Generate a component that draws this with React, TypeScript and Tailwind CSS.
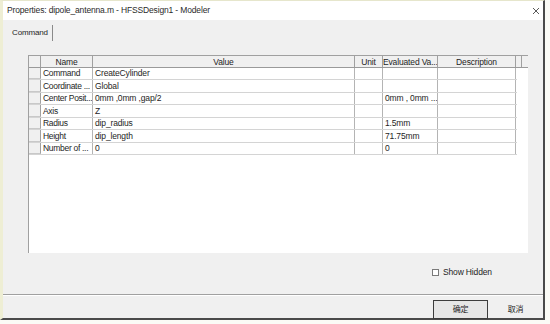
import React from "react";

const cols = [
  { w: "w-[52px]", label: "Name" },
  { w: "w-[262px]", label: "Value" },
  { w: "w-[28px]", label: "Unit" },
  { w: "w-[55px]", label: "Evaluated Va..." },
  { w: "w-[78px]", label: "Description" },
];

const rows = [
  ["Command", "CreateCylinder", "", "", ""],
  ["Coordinate ...", "Global", "", "", ""],
  ["Center Posit...", "0mm ,0mm ,gap/2", "", "0mm , 0mm ...", ""],
  ["Axis", "Z", "", "", ""],
  ["Radius", "dip_radius", "", "1.5mm", ""],
  ["Height", "dip_length", "", "71.75mm", ""],
  ["Number of ...", "0", "", "0", ""],
];

export default function App() {
  return (
    <div
      className="w-[550px] h-[324px] bg-[#fbfbf6] overflow-hidden text-[#1e1e1e] tracking-[-0.15px]"
      style={{ fontFamily: '"Liberation Sans", "Noto Sans CJK SC", sans-serif' }}
    >
      <div className="w-[545px] h-[320px] flex flex-col border-l-[3px] border-l-[#eeeed4] border-t border-t-[#e6e6cc] border-r-2 border-r-[#4a4a4a] border-b-2 border-b-[#4a4a4a] bg-[#f0f0f0]">
        {/* title bar */}
        <div className="h-[19px] bg-white flex items-center justify-between pl-[4px] pr-[3px] shrink-0">
          <span className="text-[8.5px] text-[#2a2a2a] leading-none">
            Properties: dipole_antenna.m - HFSSDesign1 - Modeler
          </span>
          <svg width="8" height="8" viewBox="0 0 8 8">
            <path d="M1 1L7 7M7 1L1 7" stroke="#5a5a5a" strokeWidth="1" />
          </svg>
        </div>
        {/* tab row */}
        <div className="mt-[5px] pl-[7px] flex shrink-0">
          <div className="w-[43px] h-[16px] border-r border-r-[#8a8a8a] flex items-center pl-[2px] text-[8px] leading-none">
            Command
          </div>
        </div>
        {/* grid */}
        <div className="mt-[14px] ml-[25px] w-[500px] h-[198px] bg-white border-l border-l-[#a0a0a0] shrink-0 flex flex-col">
          {/* header */}
          <div className="flex h-[13px] border-t border-t-[#a0a0a0] border-b border-b-[#9a9a9a] bg-[#f0f0f0]">
            <div className="w-[12px] border-r border-r-[#a0a0a0]" />
            {cols.map((c, i) => (
              <div
                key={i}
                className={`${c.w} border-r border-r-[#a0a0a0] text-[8.5px] leading-[12px] text-center whitespace-nowrap overflow-hidden`}
              >
                {c.label}
              </div>
            ))}
            <div className="w-[6px] border-r border-r-[#a0a0a0]" />
          </div>
          {rows.map((r, ri) => (
            <div
              key={ri}
              className={`flex ${ri % 2 === 0 ? "h-[12px]" : "h-[13px]"} border-b border-b-[#d4d4d4] w-[488px]`}
            >
              <div className="w-[12px] bg-[#f0f0f0] border-r border-r-[#a0a0a0] border-b border-b-[#c8c8c8]" />
              {r.map((v, ci) => (
                <div
                  key={ci}
                  className={`${cols[ci].w} border-r border-r-[#b4b4b4] text-[8.5px] leading-none flex items-center pl-[2px] whitespace-nowrap overflow-hidden ${ci === 0 ? "tracking-[-0.3px] pl-[1px]" : ""}`}
                >
                  {v}
                </div>
              ))}
            </div>
          ))}
        </div>
        {/* show hidden */}
        <div className="mt-[13px] h-[12px] flex items-center pl-[429px] shrink-0">
          <div className="w-[7px] h-[7px] border border-[#7a7a7a] bg-white" />
          <span className="ml-[4px] text-[8.5px] leading-none">Show Hidden</span>
        </div>
        {/* separator */}
        <div className="mt-[16px] h-[2px] border-t border-t-[#a0a0a0] border-b border-b-white shrink-0" />
        {/* buttons */}
        <div className="mt-[4px] flex pl-[430px] shrink-0">
          <div className="w-[55px] h-[19px] border border-[#3c3c3c] bg-[#e6e6e6] flex items-center justify-center text-[8px] leading-none">
            确定
          </div>
          <div className="w-[55px] h-[19px] flex items-center justify-center text-[8px] leading-none">
            取消
          </div>
        </div>
      </div>
    </div>
  );
}
